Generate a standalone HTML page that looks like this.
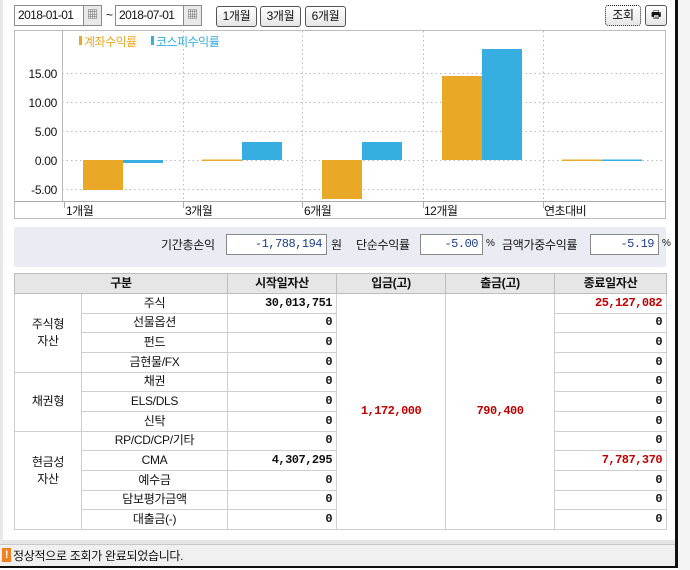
<!DOCTYPE html>
<html><head><meta charset="utf-8">
<style>
*{box-sizing:border-box}
body{margin:0;width:690px;height:570px;overflow:hidden;background:#fff;font-family:"Liberation Sans","Noto Sans CJK KR",sans-serif;font-size:12px;color:#111;position:relative;letter-spacing:-0.3px}
.abs{position:absolute}
.inp{position:absolute;height:21px;border:1px solid #8a8a8a;background:#fff;font-size:12px;line-height:19px;padding-left:3px;letter-spacing:-0.6px;white-space:nowrap;overflow:hidden}
.cal{position:absolute;width:19px;height:21px;border:1px solid #8a8a8a;background:#e9e9e9;text-align:center;line-height:19px;font-size:11px;color:#555}
.btn{position:absolute;height:21px;border:1px solid #555;border-radius:3px;background:linear-gradient(#fff,#e6e6e6);text-align:center;line-height:19px;font-size:12px}
table{border-collapse:collapse;position:absolute;left:14px;top:273px;width:652px;table-layout:fixed}
td,th{border:1px solid #cfcfcf;height:19.67px;padding:0 4px;font-size:12px;line-height:17px}
th{background:#e6e6e6;font-weight:bold;border-color:#bdbdbd;height:20px}
.c{text-align:center}.r{text-align:right;font-weight:bold;font-family:"Liberation Mono","Noto Sans CJK KR",monospace;letter-spacing:-0.5px}
.red{color:#c00000}
.sv{position:absolute;height:21px;border:1px solid #8a8a8a;background:#fff;text-align:right;padding-right:4px;line-height:19px;color:#1d3f8a;font-family:"Liberation Mono",monospace;font-size:12px;letter-spacing:-0.5px}
</style></head><body>
<div class="abs" style="left:0;top:0;width:3px;height:545px;background:#e8e8e8"></div>
<div class="inp" style="left:14px;top:5px;width:70px">2018-01-01</div><div class="cal" style="left:83px;top:5px">▦</div>
<div class="abs" style="left:106px;top:8px">~</div>
<div class="inp" style="left:115px;top:5px;width:69px">2018-07-01</div><div class="cal" style="left:183px;top:5px">▦</div>
<div class="btn" style="left:216px;top:6px;width:41px">1개월</div>
<div class="btn" style="left:260px;top:6px;width:41px">3개월</div>
<div class="btn" style="left:305px;top:6px;width:41px">6개월</div>
<div class="btn" style="left:605px;top:5px;width:36px;border-style:dotted;border-color:#222">조회</div>
<div class="btn" style="left:645px;top:5px;width:22px;font-size:11px">🖶</div>

<svg class="abs" style="left:0;top:0" width="690" height="222">
<rect x="14.5" y="30.5" width="651" height="188" fill="#fff" stroke="#bdbdbd"/>
<g stroke="#bbb" stroke-dasharray="1.5,3">
<line x1="62" y1="73.5" x2="664" y2="73.5"/><line x1="62" y1="102.5" x2="664" y2="102.5"/>
<line x1="62" y1="131.5" x2="664" y2="131.5"/><line x1="62" y1="160.5" x2="664" y2="160.5"/>
<line x1="62" y1="189.5" x2="664" y2="189.5"/>
<line x1="183.5" y1="31" x2="183.5" y2="201"/><line x1="302.5" y1="31" x2="302.5" y2="201"/>
<line x1="423.5" y1="31" x2="423.5" y2="201"/><line x1="543.5" y1="31" x2="543.5" y2="201"/>
</g>
<line x1="62.5" y1="31" x2="62.5" y2="201" stroke="#bbb"/>
<line x1="15" y1="201.5" x2="665" y2="201.5" stroke="#aaa"/>
<g stroke="#aaa"><line x1="64.5" y1="202" x2="64.5" y2="208"/><line x1="183.5" y1="202" x2="183.5" y2="208"/><line x1="302.5" y1="202" x2="302.5" y2="208"/><line x1="423.5" y1="202" x2="423.5" y2="208"/><line x1="543.5" y1="202" x2="543.5" y2="208"/></g>
<g fill="#e9a825"><rect x="83" y="160" width="40" height="30"/><rect x="202" y="159.5" width="40" height="1.5"/><rect x="322" y="160" width="40" height="39"/><rect x="442" y="76" width="40" height="84"/><rect x="562" y="159.5" width="40" height="1.5"/></g>
<g fill="#36aee2"><rect x="123" y="160" width="40" height="3"/><rect x="242" y="142" width="40" height="18"/><rect x="362" y="142" width="40" height="18"/><rect x="482" y="49" width="40" height="111"/><rect x="602" y="159.5" width="40" height="1.5"/></g>
<g font-family="Liberation Sans,sans-serif" font-size="12" fill="#111" text-anchor="end">
<text x="57" y="78">15.00</text><text x="57" y="107">10.00</text><text x="57" y="136">5.00</text><text x="57" y="165">0.00</text><text x="57" y="194">-5.00</text></g>
<g font-family="Liberation Sans,Noto Sans CJK KR,sans-serif" font-size="12" fill="#111" letter-spacing="-0.5">
<text x="66" y="215">1개월</text><text x="185" y="215">3개월</text><text x="304" y="215">6개월</text><text x="424" y="215">12개월</text><text x="544" y="215">연초대비</text></g>
<rect x="79" y="36" width="3" height="9" fill="#e9a825"/>
<text x="84" y="46" font-family="Liberation Sans,Noto Sans CJK KR,sans-serif" font-size="12" fill="#e9a825" letter-spacing="-0.5">계좌수익률</text>
<rect x="151" y="36" width="3" height="9" fill="#36aee2"/>
<text x="156" y="46" font-family="Liberation Sans,Noto Sans CJK KR,sans-serif" font-size="12" fill="#36aee2" letter-spacing="-0.5">코스피수익률</text>
</svg>

<div class="abs" style="left:14px;top:227px;width:652px;height:40px;background:#e9edf3;border-radius:2px"></div>
<div class="abs" style="left:161px;top:236px">기간총손익</div>
<div class="sv" style="left:226px;top:234px;width:101px">-1,788,194</div>
<div class="abs" style="left:331px;top:236px">원</div>
<div class="abs" style="left:356px;top:236px">단순수익률</div>
<div class="sv" style="left:420px;top:234px;width:63px">-5.00</div>
<div class="abs" style="left:486px;top:238px;font-size:10px">%</div>
<div class="abs" style="left:502px;top:236px">금액가중수익률</div>
<div class="sv" style="left:590px;top:234px;width:69px">-5.19</div>
<div class="abs" style="left:662px;top:238px;font-size:10px">%</div>

<table>
<colgroup><col style="width:67px"><col style="width:146px"><col style="width:109px"><col style="width:109px"><col style="width:109px"><col style="width:112px"></colgroup>
<tr><th colspan="2">구분</th><th>시작일자산</th><th>입금(고)</th><th>출금(고)</th><th>종료일자산</th></tr>
<tr><td class="c" rowspan="4">주식형<br>자산</td><td class="c">주식</td><td class="r">30,013,751</td><td class="r red" rowspan="12" style="text-align:center">1,172,000</td><td class="r red" rowspan="12" style="text-align:center">790,400</td><td class="r red">25,127,082</td></tr>
<tr><td class="c">선물옵션</td><td class="r">0</td><td class="r">0</td></tr>
<tr><td class="c">펀드</td><td class="r">0</td><td class="r">0</td></tr>
<tr><td class="c">금현물/FX</td><td class="r">0</td><td class="r">0</td></tr>
<tr><td class="c" rowspan="3">채권형</td><td class="c">채권</td><td class="r">0</td><td class="r">0</td></tr>
<tr><td class="c">ELS/DLS</td><td class="r">0</td><td class="r">0</td></tr>
<tr><td class="c">신탁</td><td class="r">0</td><td class="r">0</td></tr>
<tr><td class="c" rowspan="5" style="vertical-align:top;padding-top:22px">현금성<br>자산</td><td class="c">RP/CD/CP/기타</td><td class="r">0</td><td class="r">0</td></tr>
<tr><td class="c">CMA</td><td class="r">4,307,295</td><td class="r red">7,787,370</td></tr>
<tr><td class="c">예수금</td><td class="r">0</td><td class="r">0</td></tr>
<tr><td class="c">담보평가금액</td><td class="r">0</td><td class="r">0</td></tr>
<tr><td class="c">대출금(-)</td><td class="r">0</td><td class="r">0</td></tr>
</table>

<div class="abs" style="left:3px;top:540px;width:672px;height:4px;background:#e4e4e4"></div>
<div class="abs" style="left:0;top:544px;width:676px;height:22px;background:#f0f0f0;border-top:1px solid #c8c8c8"></div>
<div class="abs" style="left:2px;top:548px;width:9px;height:14px;background:#f08020;color:#fff;font-size:11px;font-weight:bold;text-align:center;line-height:14px">!</div>
<div class="abs" style="left:13px;top:547px;font-size:12px">정상적으로 조회가 완료되었습니다.</div>
<div class="abs" style="left:0;top:566px;width:678px;height:2px;background:#111"></div>
<div class="abs" style="left:675px;top:0;width:3px;height:568px;background:#111"></div>
<div class="abs" style="left:678px;top:0;width:12px;height:570px;background:#f4f4f4"></div>
</body></html>
